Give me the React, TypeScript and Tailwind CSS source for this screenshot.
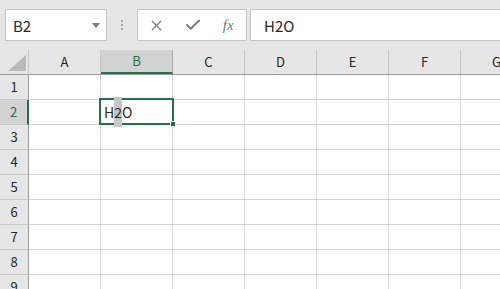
import { X, Check } from "lucide-react";

const cols = ["A", "B", "C", "D", "E", "F", "G"];
const rows = [1, 2, 3, 4, 5, 6, 7, 8, 9];

export default function App() {
  return (
    <div className="w-[500px] h-[289px] overflow-hidden bg-white relative font-['Noto_Sans_CJK_JP','Liberation_Sans',sans-serif] text-[#262626]">
      {/* Toolbar */}
      <div className="h-[50px] bg-[#e6e6e6] flex items-start pt-[9px]">
        {/* Name box */}
        <div className="ml-[5px] w-[102px] h-[32px] bg-white border border-[#c6c6c6] flex items-center justify-between pl-[7px] pr-[6px]">
          <span className="text-[15px] leading-none">B2</span>
          <svg width="8" height="5" viewBox="0 0 8 5">
            <path d="M0 0 H8 L4 5 Z" fill="#7a7a7a" />
          </svg>
        </div>
        {/* Splitter dots */}
        <div className="w-[30px] h-[32px] flex flex-col items-center justify-center gap-[2px]">
          <div className="w-[2px] h-[2px] bg-[#a6a6a6]" />
          <div className="w-[2px] h-[2px] bg-[#a6a6a6]" />
          <div className="w-[2px] h-[2px] bg-[#a6a6a6]" />
        </div>
        {/* Formula buttons */}
        <div className="w-[110px] h-[32px] bg-white border border-[#c6c6c6] flex items-center pl-[1px]">
          <div className="w-[36px] flex justify-center">
            <X size={17} strokeWidth={1.8} color="#7a7a7a" />
          </div>
          <div className="w-[36px] flex justify-center">
            <Check size={18} strokeWidth={2.6} color="#7a7a7a" />
          </div>
          <div className="w-[36px] flex justify-center">
            <span className="font-['Liberation_Serif',serif] italic text-[15px] text-[#7a7a7a] leading-none">fx</span>
          </div>
        </div>
        {/* Formula input */}
        <div className="ml-[3px] flex-1 h-[32px] bg-white border border-[#c6c6c6] border-r-0 flex items-center pl-[13px]">
          <span className="text-[15px] leading-none">H2O</span>
        </div>
      </div>

      {/* Column headers */}
      <div className="flex h-[25px] bg-[#e6e6e6] border-b border-[#9b9b9b]">
        <div className="w-[29px] shrink-0 border-r border-[#c8c8c8] flex items-end justify-end pr-[2px] pb-[3px]">
          <svg width="18" height="16" viewBox="0 0 18 16">
            <path d="M18 0 V16 H0 Z" fill="#b9b9b9" />
          </svg>
        </div>
        {cols.map((c) => (
          <div
            key={c}
            className={
              c === "B"
                ? "w-[72px] shrink-0 border-r border-[#ababab] bg-[#d2d2d2] border-b-2 border-b-[#217346] flex items-center justify-center text-[13px] text-[#217346]"
                : "w-[72px] shrink-0 border-r border-[#c8c8c8] flex items-center justify-center text-[13px] text-[#262626]"
            }
          >
            {c}
          </div>
        ))}
      </div>

      {/* Grid */}
      <div className="flex flex-col">
        {rows.map((r) => (
          <div key={r} className="flex h-[25px] shrink-0">
            <div
              className={
                r === 2
                  ? "w-[29px] shrink-0 bg-[#d2d2d2] border-r-2 border-[#217346] border-b border-b-[#c8c8c8] flex items-center justify-center text-[13px] text-[#217346]"
                  : "w-[29px] shrink-0 bg-[#e6e6e6] border-r border-[#9b9b9b] border-b border-b-[#c8c8c8] flex items-center justify-center text-[13px] text-[#262626]"
              }
            >
              {r}
            </div>
            {cols.map((c) => (
              <div key={c} className="w-[72px] shrink-0 border-r border-b border-[#d4d4d4]" />
            ))}
          </div>
        ))}
      </div>

      {/* Active cell B2 */}
      <div className="absolute left-[99px] top-[98px] w-[75px] h-[27px] border-2 border-[#217346] flex items-center pl-[3px]">
        <span className="text-[14px] leading-none">
          H<span className="bg-[#c6c6c6] py-[5px]">2</span>O
        </span>
        <div className="absolute right-[-4px] bottom-[-4px] w-[6px] h-[6px] bg-[#217346] border border-white" />
      </div>
    </div>
  );
}
